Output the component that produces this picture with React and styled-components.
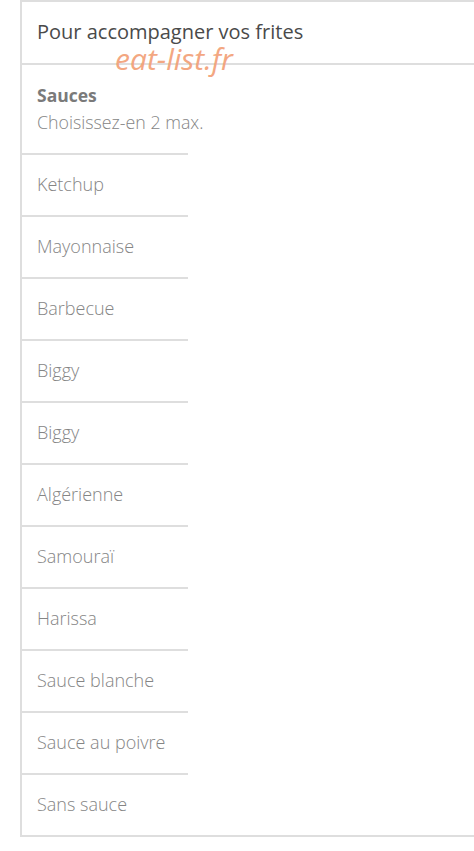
import React from "react";
import styled, { createGlobalStyle } from "styled-components";

const Global = createGlobalStyle`
  html, body { margin: 0; padding: 0; background: #fff; }
  body { font-family: "Open Sans", "Liberation Sans", sans-serif; }
  *, *::before, *::after { box-sizing: border-box; }
`;

const Card = styled.div`
  position: relative;
  margin-left: 20px;
  width: 470px;
  border: 2px solid #dedede;
  border-right: none;
  background: #fff;
`;

const Header = styled.div`
  height: 63px;
  display: flex;
  align-items: center;
  padding-left: 15px;
  padding-bottom: 2px;
  border-bottom: 2px solid #dedede;
  font-size: 20px;
  color: #4a4a4a;
`;

const Watermark = styled.div`
  position: absolute;
  left: 93px;
  top: 39px;
  font-family: "Open Sans", sans-serif;
  font-style: italic;
  font-size: 30px;
  color: #f3a077;
  opacity: 0.92;
  pointer-events: none;
  line-height: 1.2;
`;

const Section = styled.div`
  height: 88px;
  padding-left: 15px;
  display: flex;
  flex-direction: column;
  justify-content: center;
`;

const SectionTitle = styled.div`
  font-weight: 700;
  font-size: 17.5px;
  color: #7a7a7a;
  line-height: 26px;
`;

const SectionHint = styled.div`
  font-weight: 300;
  font-size: 17.8px;
  color: #858585;
  line-height: 28px;
`;

const List = styled.div`
  display: flex;
  flex-direction: column;
`;

const Item = styled.div`
  width: 166px;
  height: 62px;
  border-top: 2px solid #dedede;
  padding-left: 15px;
  padding-bottom: 3px;
  display: flex;
  align-items: center;
  font-weight: 300;
  font-size: 18px;
  color: #858585;
  white-space: nowrap;
`;

const items = [
  "Ketchup",
  "Mayonnaise",
  "Barbecue",
  "Biggy",
  "Biggy",
  "Algérienne",
  "Samouraï",
  "Harissa",
  "Sauce blanche",
  "Sauce au poivre",
  "Sans sauce",
];

export default function App() {
  return (
    <>
      <Global />
      <Card>
        <Header>Pour accompagner vos frites</Header>
        <Watermark>eat-list.fr</Watermark>
        <Section>
          <SectionTitle>Sauces</SectionTitle>
          <SectionHint>Choisissez-en 2 max.</SectionHint>
        </Section>
        <List>
          {items.map((it, i) => (
            <Item key={i}>{it}</Item>
          ))}
        </List>
      </Card>
    </>
  );
}
